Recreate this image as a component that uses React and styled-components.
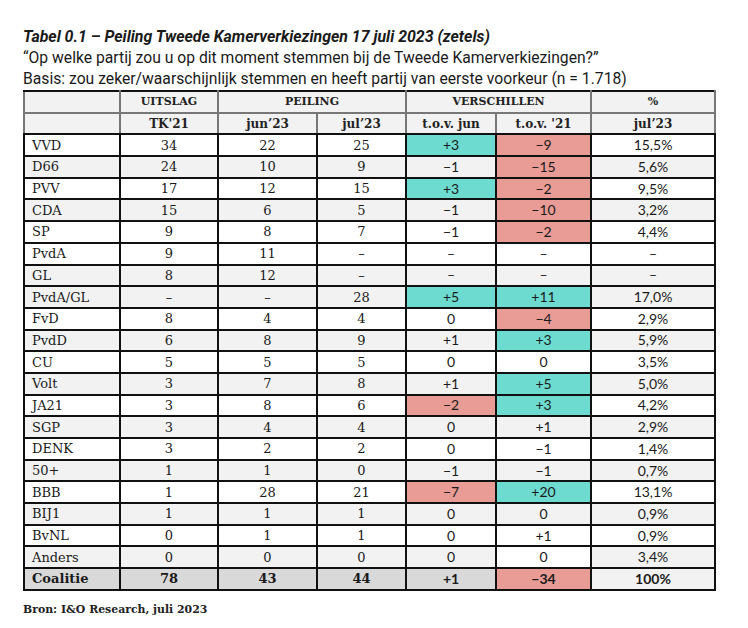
import styled, { createGlobalStyle } from "styled-components";

const GlobalStyle = createGlobalStyle`
  html, body {
    margin: 0;
    padding: 0;
    background: #ffffff;
  }
`;

const TEAL = "#6ddbd0";
const RED = "#e99c95";
const GREY = "#f2f2f2";
const DARK = "#d9d9d9";
const SERIF = '"DejaVu Serif", "Liberation Serif", serif';

const Page = styled.div`
  width: 748px;
  height: 628px;
  padding: 27px 0 0 23px;
  box-sizing: border-box;
  color: #1a1a1a;
`;

const Title = styled.div`
  font-family: Roboto, "Liberation Sans", sans-serif;
  font-size: 15.9px;
  font-weight: 700;
  font-style: italic;
  line-height: 19px;
`;

const Sub = styled.div`
  font-family: Roboto, "Liberation Sans", sans-serif;
  font-size: 15.7px;
  line-height: 21px;
  margin-top: ${(p) => p.$mt || 0}px;
`;

const Table = styled.table`
  border-collapse: collapse;
  table-layout: fixed;
  width: 691px;
  margin-top: 1px;
  font-family: ${SERIF};
  border: 2px solid #111;
`;

const Head = styled.th`
  height: 19.7px;
  padding: 0;
  background: ${GREY};
  font-weight: 700;
  font-size: ${(p) => (p.$upper ? "11px" : "12px")};
  text-align: center;
  border: 2px solid #777;
  border-bottom-color: ${(p) => (p.$last ? "#111" : "#777")};
  border-top-color: #111;
  line-height: 1;
  color: #222;
`;

const Cell = styled.td`
  height: 19.7px;
  padding: 0;
  border: 2px solid #111;
  background: ${(p) => p.$bg};
  text-align: ${(p) => (p.$left ? "left" : "center")};
  padding-left: ${(p) => (p.$left ? "7px" : "0")};
  font-family: ${(p) => (p.$sans ? 'Lato, "Open Sans", sans-serif' : SERIF)};
  font-size: ${(p) => (p.$sans ? "14px" : "13px")};
  font-weight: ${(p) => (p.$bold ? 700 : 400)};
  line-height: 1;
  white-space: nowrap;
`;

const Source = styled.div`
  font-family: ${SERIF};
  font-weight: 700;
  font-size: 10.9px;
  margin-top: 12px;
  color: #222;
`;

// party, tk21, jun, jul, tovJun, tov21, pct, row bg, [jun colour, '21 colour]
const rows = [
  ["VVD", "34", "22", "25", "+3", "−9", "15,5%", "w", "t", "r"],
  ["D66", "24", "10", "9", "−1", "−15", "5,6%", "g", "", "r"],
  ["PVV", "17", "12", "15", "+3", "−2", "9,5%", "w", "t", "r"],
  ["CDA", "15", "6", "5", "−1", "−10", "3,2%", "g", "", "r"],
  ["SP", "9", "8", "7", "−1", "−2", "4,4%", "w", "", "r"],
  ["PvdA", "9", "11", "–", "–", "–", "–", "w", "", ""],
  ["GL", "8", "12", "–", "–", "–", "–", "g", "", ""],
  ["PvdA/GL", "–", "–", "28", "+5", "+11", "17,0%", "g", "t", "t"],
  ["FvD", "8", "4", "4", "0", "−4", "2,9%", "w", "", "r"],
  ["PvdD", "6", "8", "9", "+1", "+3", "5,9%", "g", "", "t"],
  ["CU", "5", "5", "5", "0", "0", "3,5%", "w", "", ""],
  ["Volt", "3", "7", "8", "+1", "+5", "5,0%", "g", "", "t"],
  ["JA21", "3", "8", "6", "−2", "+3", "4,2%", "w", "r", "t"],
  ["SGP", "3", "4", "4", "0", "+1", "2,9%", "g", "", ""],
  ["DENK", "3", "2", "2", "0", "−1", "1,4%", "w", "", ""],
  ["50+", "1", "1", "0", "−1", "−1", "0,7%", "g", "", ""],
  ["BBB", "1", "28", "21", "−7", "+20", "13,1%", "w", "r", "t"],
  ["BIJ1", "1", "1", "1", "0", "0", "0,9%", "g", "", ""],
  ["BvNL", "0", "1", "1", "0", "+1", "0,9%", "w", "", ""],
  ["Anders", "0", "0", "0", "0", "0", "3,4%", "g", "", "w"],
];

const colour = (code, base) => {
  if (code === "t") return TEAL;
  if (code === "r") return RED;
  if (code === "w") return "#ffffff";
  return base;
};

const App = () => {
  return (
    <>
      <GlobalStyle />
      <Page>
        <Title>Tabel 0.1 – Peiling Tweede Kamerverkiezingen 17 juli 2023 (zetels)</Title>
        <Sub $mt={1}>“Op welke partij zou u op dit moment stemmen bij de Tweede Kamerverkiezingen?”</Sub>
        <Sub>Basis: zou zeker/waarschijnlijk stemmen en heeft partij van eerste voorkeur (n = 1.718)</Sub>
        <Table>
          <colgroup>
            <col style={{ width: 96 }} />
            <col style={{ width: 98 }} />
            <col style={{ width: 99 }} />
            <col style={{ width: 89 }} />
            <col style={{ width: 90 }} />
            <col style={{ width: 95 }} />
            <col style={{ width: 124 }} />
          </colgroup>
          <thead>
            <tr>
              <Head $upper></Head>
              <Head $upper>UITSLAG</Head>
              <Head $upper colSpan={2}>PEILING</Head>
              <Head $upper colSpan={2}>VERSCHILLEN</Head>
              <Head $upper>%</Head>
            </tr>
            <tr>
              <Head $last></Head>
              <Head $last>TK'21</Head>
              <Head $last>jun’23</Head>
              <Head $last>jul’23</Head>
              <Head $last>t.o.v. jun</Head>
              <Head $last>t.o.v. '21</Head>
              <Head $last>jul’23</Head>
            </tr>
          </thead>
          <tbody>
            {rows.map((r) => {
              const base = r[7] === "g" ? GREY : "#ffffff";
              return (
                <tr key={r[0]}>
                  <Cell $left $bg={base}>{r[0]}</Cell>
                  <Cell $bg={base}>{r[1]}</Cell>
                  <Cell $bg={base}>{r[2]}</Cell>
                  <Cell $bg={base}>{r[3]}</Cell>
                  <Cell $sans $bg={colour(r[8], base)}>{r[4]}</Cell>
                  <Cell $sans $bg={colour(r[9], base)}>{r[5]}</Cell>
                  <Cell $sans $bg={base}>{r[6]}</Cell>
                </tr>
              );
            })}
            <tr>
              <Cell $left $bold $bg={DARK}>Coalitie</Cell>
              <Cell $bold $bg={DARK}>78</Cell>
              <Cell $bold $bg={DARK}>43</Cell>
              <Cell $bold $bg={DARK}>44</Cell>
              <Cell $sans $bold $bg={DARK}>+1</Cell>
              <Cell $sans $bold $bg={RED}>−34</Cell>
              <Cell $sans $bold $bg={GREY}>100%</Cell>
            </tr>
          </tbody>
        </Table>
        <Source>Bron: I&amp;O Research, juli 2023</Source>
      </Page>
    </>
  );
};

export default App;
